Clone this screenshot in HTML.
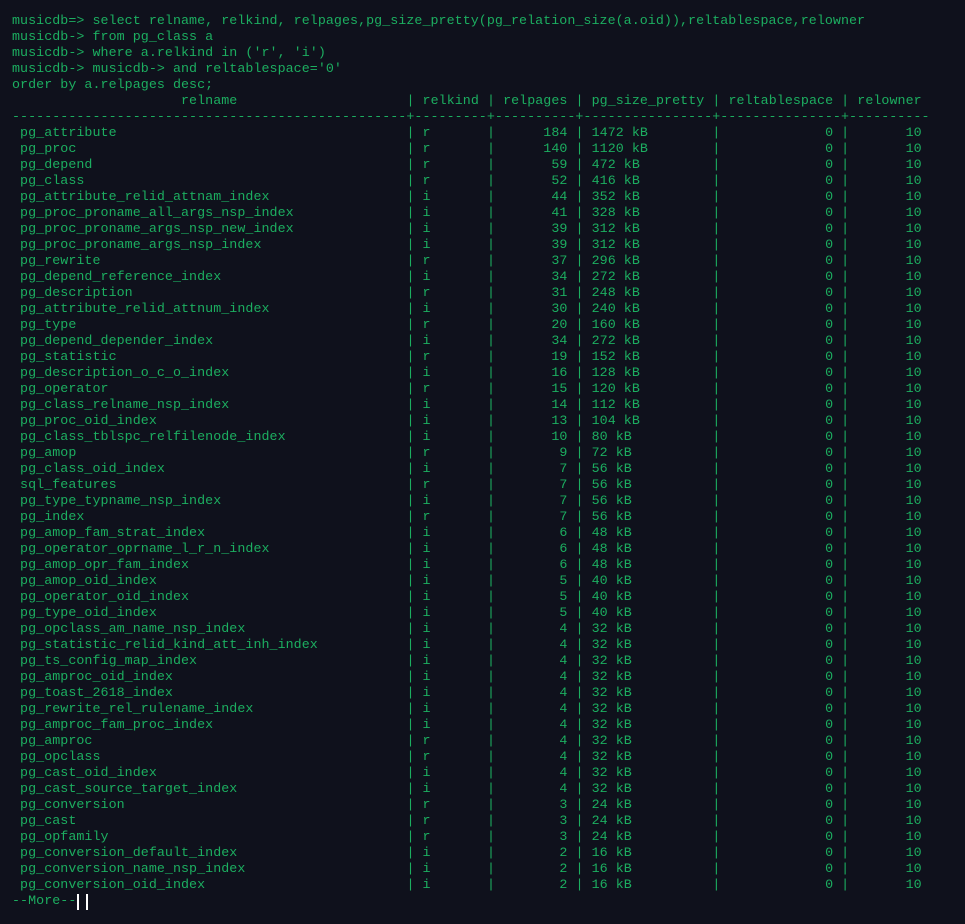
<!DOCTYPE html>
<html><head><meta charset="utf-8"><style>
html,body{margin:0;padding:0;background:#0f111c;width:965px;height:924px;overflow:hidden}
#t{position:absolute;left:12px;top:14px;font-family:"Liberation Mono",monospace;font-size:13.33px;letter-spacing:0.05px;line-height:16px;color:#1cae60;white-space:normal}
#t div{height:16px;white-space:pre}
span{display:inline-block;white-space:pre}
.n{width:394.45px}.k{width:72.45px}.p{width:80.5px;text-align:right}.s{width:128.8px}.t{width:120.75px;text-align:right}.o{width:72.45px;text-align:right}
.cur{display:inline-block;width:2px;height:16px;background:#fff;vertical-align:top;margin-left:1px}
</style></head><body><div id="t">
<div>musicdb=&gt; select relname, relkind, relpages,pg_size_pretty(pg_relation_size(a.oid)),reltablespace,relowner</div>
<div>musicdb-&gt; from pg_class a</div>
<div>musicdb-&gt; where a.relkind in ('r', 'i')</div>
<div>musicdb-&gt; musicdb-&gt; and reltablespace='0'</div>
<div>order by a.relpages desc;</div>
<div><span class="n">                     relname                     </span>|<span class="k"> relkind </span>|<span class="p"> relpages </span>|<span class="s"> pg_size_pretty </span>|<span class="t"> reltablespace </span>|<span class="o"> relowner </span></div>
<div>-------------------------------------------------+---------+----------+----------------+---------------+----------</div>
<div><span class="n"> pg_attribute</span>|<span class="k"> r</span>|<span class="p">184 </span>|<span class="s"> 1472 kB</span>|<span class="t">0 </span>|<span class="o">10</span></div>
<div><span class="n"> pg_proc</span>|<span class="k"> r</span>|<span class="p">140 </span>|<span class="s"> 1120 kB</span>|<span class="t">0 </span>|<span class="o">10</span></div>
<div><span class="n"> pg_depend</span>|<span class="k"> r</span>|<span class="p">59 </span>|<span class="s"> 472 kB</span>|<span class="t">0 </span>|<span class="o">10</span></div>
<div><span class="n"> pg_class</span>|<span class="k"> r</span>|<span class="p">52 </span>|<span class="s"> 416 kB</span>|<span class="t">0 </span>|<span class="o">10</span></div>
<div><span class="n"> pg_attribute_relid_attnam_index</span>|<span class="k"> i</span>|<span class="p">44 </span>|<span class="s"> 352 kB</span>|<span class="t">0 </span>|<span class="o">10</span></div>
<div><span class="n"> pg_proc_proname_all_args_nsp_index</span>|<span class="k"> i</span>|<span class="p">41 </span>|<span class="s"> 328 kB</span>|<span class="t">0 </span>|<span class="o">10</span></div>
<div><span class="n"> pg_proc_proname_args_nsp_new_index</span>|<span class="k"> i</span>|<span class="p">39 </span>|<span class="s"> 312 kB</span>|<span class="t">0 </span>|<span class="o">10</span></div>
<div><span class="n"> pg_proc_proname_args_nsp_index</span>|<span class="k"> i</span>|<span class="p">39 </span>|<span class="s"> 312 kB</span>|<span class="t">0 </span>|<span class="o">10</span></div>
<div><span class="n"> pg_rewrite</span>|<span class="k"> r</span>|<span class="p">37 </span>|<span class="s"> 296 kB</span>|<span class="t">0 </span>|<span class="o">10</span></div>
<div><span class="n"> pg_depend_reference_index</span>|<span class="k"> i</span>|<span class="p">34 </span>|<span class="s"> 272 kB</span>|<span class="t">0 </span>|<span class="o">10</span></div>
<div><span class="n"> pg_description</span>|<span class="k"> r</span>|<span class="p">31 </span>|<span class="s"> 248 kB</span>|<span class="t">0 </span>|<span class="o">10</span></div>
<div><span class="n"> pg_attribute_relid_attnum_index</span>|<span class="k"> i</span>|<span class="p">30 </span>|<span class="s"> 240 kB</span>|<span class="t">0 </span>|<span class="o">10</span></div>
<div><span class="n"> pg_type</span>|<span class="k"> r</span>|<span class="p">20 </span>|<span class="s"> 160 kB</span>|<span class="t">0 </span>|<span class="o">10</span></div>
<div><span class="n"> pg_depend_depender_index</span>|<span class="k"> i</span>|<span class="p">34 </span>|<span class="s"> 272 kB</span>|<span class="t">0 </span>|<span class="o">10</span></div>
<div><span class="n"> pg_statistic</span>|<span class="k"> r</span>|<span class="p">19 </span>|<span class="s"> 152 kB</span>|<span class="t">0 </span>|<span class="o">10</span></div>
<div><span class="n"> pg_description_o_c_o_index</span>|<span class="k"> i</span>|<span class="p">16 </span>|<span class="s"> 128 kB</span>|<span class="t">0 </span>|<span class="o">10</span></div>
<div><span class="n"> pg_operator</span>|<span class="k"> r</span>|<span class="p">15 </span>|<span class="s"> 120 kB</span>|<span class="t">0 </span>|<span class="o">10</span></div>
<div><span class="n"> pg_class_relname_nsp_index</span>|<span class="k"> i</span>|<span class="p">14 </span>|<span class="s"> 112 kB</span>|<span class="t">0 </span>|<span class="o">10</span></div>
<div><span class="n"> pg_proc_oid_index</span>|<span class="k"> i</span>|<span class="p">13 </span>|<span class="s"> 104 kB</span>|<span class="t">0 </span>|<span class="o">10</span></div>
<div><span class="n"> pg_class_tblspc_relfilenode_index</span>|<span class="k"> i</span>|<span class="p">10 </span>|<span class="s"> 80 kB</span>|<span class="t">0 </span>|<span class="o">10</span></div>
<div><span class="n"> pg_amop</span>|<span class="k"> r</span>|<span class="p">9 </span>|<span class="s"> 72 kB</span>|<span class="t">0 </span>|<span class="o">10</span></div>
<div><span class="n"> pg_class_oid_index</span>|<span class="k"> i</span>|<span class="p">7 </span>|<span class="s"> 56 kB</span>|<span class="t">0 </span>|<span class="o">10</span></div>
<div><span class="n"> sql_features</span>|<span class="k"> r</span>|<span class="p">7 </span>|<span class="s"> 56 kB</span>|<span class="t">0 </span>|<span class="o">10</span></div>
<div><span class="n"> pg_type_typname_nsp_index</span>|<span class="k"> i</span>|<span class="p">7 </span>|<span class="s"> 56 kB</span>|<span class="t">0 </span>|<span class="o">10</span></div>
<div><span class="n"> pg_index</span>|<span class="k"> r</span>|<span class="p">7 </span>|<span class="s"> 56 kB</span>|<span class="t">0 </span>|<span class="o">10</span></div>
<div><span class="n"> pg_amop_fam_strat_index</span>|<span class="k"> i</span>|<span class="p">6 </span>|<span class="s"> 48 kB</span>|<span class="t">0 </span>|<span class="o">10</span></div>
<div><span class="n"> pg_operator_oprname_l_r_n_index</span>|<span class="k"> i</span>|<span class="p">6 </span>|<span class="s"> 48 kB</span>|<span class="t">0 </span>|<span class="o">10</span></div>
<div><span class="n"> pg_amop_opr_fam_index</span>|<span class="k"> i</span>|<span class="p">6 </span>|<span class="s"> 48 kB</span>|<span class="t">0 </span>|<span class="o">10</span></div>
<div><span class="n"> pg_amop_oid_index</span>|<span class="k"> i</span>|<span class="p">5 </span>|<span class="s"> 40 kB</span>|<span class="t">0 </span>|<span class="o">10</span></div>
<div><span class="n"> pg_operator_oid_index</span>|<span class="k"> i</span>|<span class="p">5 </span>|<span class="s"> 40 kB</span>|<span class="t">0 </span>|<span class="o">10</span></div>
<div><span class="n"> pg_type_oid_index</span>|<span class="k"> i</span>|<span class="p">5 </span>|<span class="s"> 40 kB</span>|<span class="t">0 </span>|<span class="o">10</span></div>
<div><span class="n"> pg_opclass_am_name_nsp_index</span>|<span class="k"> i</span>|<span class="p">4 </span>|<span class="s"> 32 kB</span>|<span class="t">0 </span>|<span class="o">10</span></div>
<div><span class="n"> pg_statistic_relid_kind_att_inh_index</span>|<span class="k"> i</span>|<span class="p">4 </span>|<span class="s"> 32 kB</span>|<span class="t">0 </span>|<span class="o">10</span></div>
<div><span class="n"> pg_ts_config_map_index</span>|<span class="k"> i</span>|<span class="p">4 </span>|<span class="s"> 32 kB</span>|<span class="t">0 </span>|<span class="o">10</span></div>
<div><span class="n"> pg_amproc_oid_index</span>|<span class="k"> i</span>|<span class="p">4 </span>|<span class="s"> 32 kB</span>|<span class="t">0 </span>|<span class="o">10</span></div>
<div><span class="n"> pg_toast_2618_index</span>|<span class="k"> i</span>|<span class="p">4 </span>|<span class="s"> 32 kB</span>|<span class="t">0 </span>|<span class="o">10</span></div>
<div><span class="n"> pg_rewrite_rel_rulename_index</span>|<span class="k"> i</span>|<span class="p">4 </span>|<span class="s"> 32 kB</span>|<span class="t">0 </span>|<span class="o">10</span></div>
<div><span class="n"> pg_amproc_fam_proc_index</span>|<span class="k"> i</span>|<span class="p">4 </span>|<span class="s"> 32 kB</span>|<span class="t">0 </span>|<span class="o">10</span></div>
<div><span class="n"> pg_amproc</span>|<span class="k"> r</span>|<span class="p">4 </span>|<span class="s"> 32 kB</span>|<span class="t">0 </span>|<span class="o">10</span></div>
<div><span class="n"> pg_opclass</span>|<span class="k"> r</span>|<span class="p">4 </span>|<span class="s"> 32 kB</span>|<span class="t">0 </span>|<span class="o">10</span></div>
<div><span class="n"> pg_cast_oid_index</span>|<span class="k"> i</span>|<span class="p">4 </span>|<span class="s"> 32 kB</span>|<span class="t">0 </span>|<span class="o">10</span></div>
<div><span class="n"> pg_cast_source_target_index</span>|<span class="k"> i</span>|<span class="p">4 </span>|<span class="s"> 32 kB</span>|<span class="t">0 </span>|<span class="o">10</span></div>
<div><span class="n"> pg_conversion</span>|<span class="k"> r</span>|<span class="p">3 </span>|<span class="s"> 24 kB</span>|<span class="t">0 </span>|<span class="o">10</span></div>
<div><span class="n"> pg_cast</span>|<span class="k"> r</span>|<span class="p">3 </span>|<span class="s"> 24 kB</span>|<span class="t">0 </span>|<span class="o">10</span></div>
<div><span class="n"> pg_opfamily</span>|<span class="k"> r</span>|<span class="p">3 </span>|<span class="s"> 24 kB</span>|<span class="t">0 </span>|<span class="o">10</span></div>
<div><span class="n"> pg_conversion_default_index</span>|<span class="k"> i</span>|<span class="p">2 </span>|<span class="s"> 16 kB</span>|<span class="t">0 </span>|<span class="o">10</span></div>
<div><span class="n"> pg_conversion_name_nsp_index</span>|<span class="k"> i</span>|<span class="p">2 </span>|<span class="s"> 16 kB</span>|<span class="t">0 </span>|<span class="o">10</span></div>
<div><span class="n"> pg_conversion_oid_index</span>|<span class="k"> i</span>|<span class="p">2 </span>|<span class="s"> 16 kB</span>|<span class="t">0 </span>|<span class="o">10</span></div>
<div>--More--<span class="cur"></span><span class="cur" style="margin-left:7px"></span></div>
</div></body></html>
